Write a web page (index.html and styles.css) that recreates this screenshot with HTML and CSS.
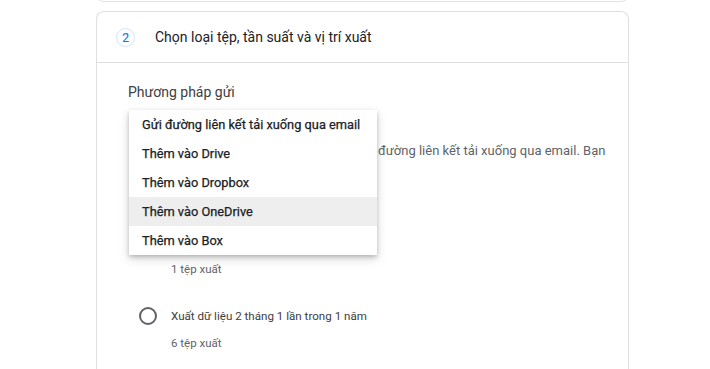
FILE: index.html
```html
<!DOCTYPE html>
<html lang="vi">
<head>
<meta charset="utf-8">
<link rel="stylesheet" href="styles.css">
</head>
<body>
<div class="page">
  <div class="prev-card"></div>
  <section class="card">
    <header class="card-head">
      <span class="step">2</span>
      <h2 class="card-title">Chọn loại tệp, tần suất và vị trí xuất</h2>
    </header>
    <div class="card-body">
      <div class="field-label">Phương pháp gửi</div>
      <div class="select-wrap">
        <div class="select-box">Gửi đường liên kết tải xuống qua email</div>
        <ul class="menu">
          <li class="menu-item">Gửi đường liên kết tải xuống qua email</li>
          <li class="menu-item">Thêm vào Drive</li>
          <li class="menu-item">Thêm vào Dropbox</li>
          <li class="menu-item active">Thêm vào OneDrive</li>
          <li class="menu-item">Thêm vào Box</li>
        </ul>
      </div>
      <p class="desc"><span class="desc-hidden">Khi tệp sẵn sàng, bạn sẽ nhận được</span>đường liên kết tải xuống qua email. Bạn</p>
      <div class="options">
        <div class="option">
          <div class="option-row"><span class="radio"></span><span class="option-label">Xuất một lần</span></div>
          <div class="option-sub">1 tệp xuất</div>
        </div>
        <div class="option">
          <div class="option-row"><span class="radio"></span><span class="option-label">Xuất dữ liệu 2 tháng 1 lần trong 1 năm</span></div>
          <div class="option-sub">6 tệp xuất</div>
        </div>
      </div>
    </div>
  </section>
</div>
</body>
</html>
```

FILE: styles.css
```css
* { box-sizing: border-box; }
html, body { margin: 0; padding: 0; background: #fff; }
body {
  font-family: Roboto, "Liberation Sans", Arial, sans-serif;
  color: #202124;
  overflow: hidden;
  height: 369px;
}
.page {
  width: 533px;
  margin-left: 96px;
}
.prev-card {
  height: 12px;
  margin-top: -10px;
  border: 1px solid #e3e3e3;
  border-top: none;
  border-radius: 0 0 8px 8px;
}
.card {
  margin-top: 9px;
  border: 1px solid #e0e0e0;
  border-bottom: none;
  border-radius: 8px 8px 0 0;
  height: 400px;
}
.card-head {
  height: 51px;
  display: flex;
  align-items: center;
  padding-left: 19px;
  border-bottom: 1px solid #e0e0e0;
}
.step {
  width: 19px;
  height: 19px;
  border: 1px solid #d2e3fc;
  border-radius: 50%;
  color: #1a73e8;
  font-size: 12px;
  display: flex;
  align-items: center;
  justify-content: center;
  margin-top: 1px;
  -webkit-text-stroke: 0.2px #1a73e8;
}
.card-title {
  margin: 0 0 0 20px;
  font-size: 14px;
  font-weight: 400;
  color: #202124;
}
.card-body {
  padding: 18px 0 0 31px;
  position: relative;
}
.field-label {
  font-size: 14px;
  line-height: 22px;
  color: #3c4043;
}
.select-wrap {
  position: relative;
  margin-top: 7px;
  height: 30px;
}
.select-box {
  font-size: 13px;
  line-height: 30px;
  padding-left: 14px;
  color: #202124;
}
.menu {
  position: absolute;
  left: 1px;
  top: 0;
  width: 248px;
  margin: 0;
  padding: 0;
  list-style: none;
  background: #fff;
  box-shadow: 0 2px 4px rgba(0,0,0,0.2), 0 4px 10px rgba(0,0,0,0.15);
  z-index: 2;
}
.menu-item {
  height: 29px;
  line-height: 29px;
  padding-left: 13px;
  font-size: 12.8px;
  font-weight: 400;
  color: #202124;
  white-space: nowrap;
  -webkit-text-stroke: 0.25px #202124;
}
.menu-item.active { background: #eeeeee; }
.desc {
  margin: 1px 0 0;
  font-size: 13px;
  line-height: 20px;
  color: #5f6368;
  white-space: nowrap;
}
.desc-hidden {
  display: inline-block;
  width: 250px;
  padding-left: 6px;
  overflow: hidden;
  vertical-align: top;
}
.options { margin-top: 69px; }
.option-row {
  display: flex;
  align-items: center;
  height: 20px;
  padding-left: 11px;
}
.radio {
  width: 18px;
  height: 18px;
  border: 2px solid #5f6368;
  border-radius: 50%;
  flex: none;
}
.option-label {
  margin-left: 14px;
  font-size: 11.6px;
  color: #3c4043;
}
.option-sub {
  margin-top: 9px;
  padding-left: 43px;
  font-size: 11.5px;
  line-height: 20px;
  color: #5f6368;
}
.option + .option { margin-top: 27px; }
.option + .option .option-sub { margin-top: 7px; }
```
